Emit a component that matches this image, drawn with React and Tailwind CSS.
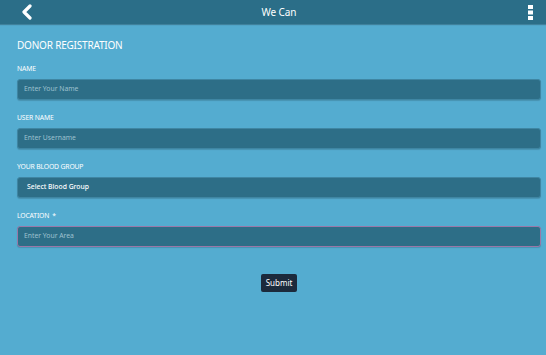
import React from "react";

function Field({ label, placeholder, required, invalid, select }) {
  return (
    <div className="flex flex-col">
      <label className="text-[6.8px] leading-[8px] h-[8px] text-white uppercase tracking-[-0.15px]">
        {label}
        {required && <span className="ml-[3px]">*</span>}
      </label>
      <div
        className={`mt-[6px] h-[21px] rounded-[3px] bg-[#2d6e87] flex items-center border ${
          invalid ? "border-[#9a78a8]" : "border-[#3f86a3]"
        } shadow-[0_1px_1px_rgba(0,0,0,0.15)] ${select ? "px-[9px]" : "px-[6px]"}`}
      >
        {select ? (
          <span className="text-[6.8px] text-white font-medium">{placeholder}</span>
        ) : (
          <input
            className="w-full bg-transparent outline-none text-[6.8px] text-white placeholder:text-[#9fc2d0]"
            placeholder={placeholder}
          />
        )}
      </div>
    </div>
  );
}

export default function App() {
  return (
    <div
      className="w-[546px] h-[355px] bg-[#54acd0] overflow-hidden flex flex-col"
      style={{ fontFamily: '"Noto Sans", "Open Sans", sans-serif' }}
    >
      <header className="h-[24px] bg-[#2b6e88] flex items-center justify-between pl-[21px] pr-[13px] shadow-[0_1px_1px_rgba(0,0,0,0.25)] relative">
        <svg width="12" height="16" viewBox="0 0 12 16">
          <path d="M9 2 L3 8 L9 14" stroke="white" strokeWidth="3.2" fill="none" strokeLinecap="round" strokeLinejoin="round" />
        </svg>
        <span className="text-[10px] text-white absolute left-1/2 -translate-x-1/2 ml-[6px] tracking-[-0.1px]">We Can</span>
        <svg width="5" height="15" viewBox="0 0 5 15">
          <rect x="0" y="0" width="5" height="4" fill="white" />
          <rect x="0" y="5.5" width="5" height="4" fill="white" />
          <rect x="0" y="11" width="5" height="4" fill="white" />
        </svg>
      </header>
      <main className="pl-[17px] pr-[5px] pt-[14px] flex flex-col">
        <h1 className="text-[10px] leading-[14px] text-white uppercase tracking-[-0.2px]">Donor Registration</h1>
        <div className="mt-[13px] flex flex-col gap-[14px]">
          <Field label="Name" placeholder="Enter Your Name" />
          <Field label="User Name" placeholder="Enter Username" />
          <Field label="Your Blood Group" placeholder="Select Blood Group" select />
          <Field label="Location" placeholder="Enter Your Area" required invalid />
        </div>
        <div className="mt-[27px] flex justify-center">
          <button className="h-[18px] w-[36px] rounded-[2px] bg-[#1c2a3c] text-white text-[8px]">Submit</button>
        </div>
      </main>
    </div>
  );
}
